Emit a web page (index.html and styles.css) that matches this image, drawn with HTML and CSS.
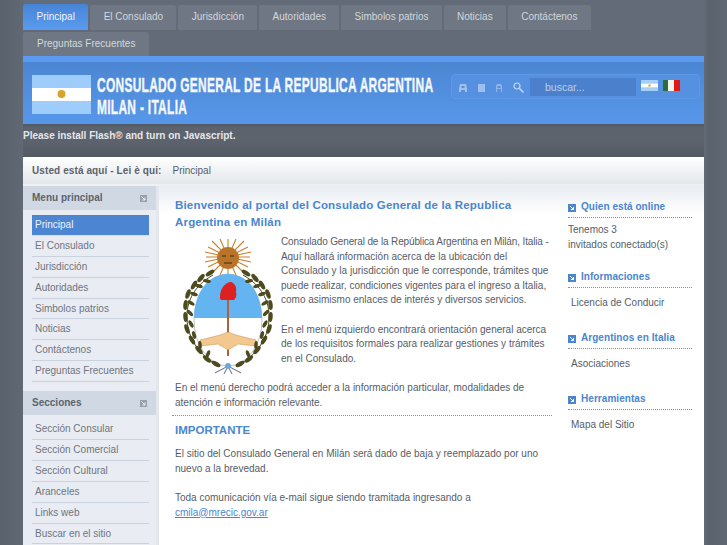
FILE: index.html
```html
<!DOCTYPE html>
<html lang="es">
<head>
  <meta charset="UTF-8">
  <title>Consulado General de la Republica Argentina - Milan</title>
  <link rel="stylesheet" href="styles.css">
</head>
<body>
  <div class="wrapper">
    <!-- Top menu -->
    <ul class="tabs">
      <li class="tab active">Principal</li>
      <li class="tab">El Consulado</li>
      <li class="tab">Jurisdicción</li>
      <li class="tab">Autoridades</li>
      <li class="tab">Simbolos patrios</li>
      <li class="tab">Noticias</li>
      <li class="tab">Contáctenos</li>
      <li class="tab">Preguntas Frecuentes</li>
    </ul>

    <!-- Banner -->
    <div class="banner">
      <svg class="banner-flag" width="59" height="39" viewBox="0 0 59 39">
        <rect width="59" height="39" fill="#9fcdfb"/>
        <rect y="13" width="59" height="13" fill="#fff"/>
        <circle cx="29.5" cy="19" r="4" fill="#d9a32e"/>
      </svg>
      <div class="banner-title">
        <span>CONSULADO GENERAL DE LA REPUBLICA ARGENTINA</span>
        <span>MILAN - ITALIA</span>
      </div>
      <div class="tools">
        <svg class="tool" width="10" height="10" viewBox="0 0 10 10"><path d="M2 1h6l1 4v4H7V7H3v2H1V5z M3.500 3v2h3V3z" fill="#9fc0ec" fill-rule="evenodd"/></svg>
        <svg class="tool" width="7" height="8" viewBox="0 0 7 8"><rect width="7" height="8" fill="#9fc0ec"/></svg>
        <svg class="tool" width="8" height="10" viewBox="0 0 8 10"><path d="M1 9V3l1-2h4l1 2v6H6V6H2v3z M2.500 3v2h3V3z" fill="#8fb4e6" fill-rule="evenodd"/></svg>
        <svg class="tool" width="11" height="11" viewBox="0 0 11 11"><circle cx="4" cy="4" r="3" fill="none" stroke="#c6daf5" stroke-width="1.200"/><path d="M6.500 6.500 10.500 10.500" stroke="#c6daf5" stroke-width="1.500"/></svg>
        <div class="search">buscar...</div>
        <svg class="mini-flag" width="17" height="11" viewBox="0 0 17 11">
          <rect width="17" height="11" fill="#a4d0f7"/>
          <rect y="3.700" width="17" height="3.600" fill="#fff"/>
          <circle cx="8.500" cy="5.500" r="1.300" fill="#e0b040"/>
        </svg>
        <svg class="mini-flag" width="17" height="11" viewBox="0 0 17 11">
          <rect width="6" height="11" fill="#2e6a3a"/>
          <rect x="5" width="6" height="11" fill="#f4f4f0"/>
          <rect x="11" width="6" height="11" fill="#e01b12"/>
        </svg>
      </div>
    </div>

    <div class="flash-note">Please install Flash® and turn on Javascript.</div>

    <div class="breadcrumb">
      <strong>Usted está aquí - Lei è qui:</strong>
      <span>Principal</span>
    </div>

    <div class="main">
      <!-- Left column -->
      <div class="left-col">
        <div class="menu-head">Menu principal
          <svg class="collapse" width="7" height="7" viewBox="0 0 7 7"><rect width="7" height="7" fill="#98a1ab"/><path d="M1.500 1.500 5 5M5 2.500V5H2.500" stroke="#eef1f4" fill="none"/></svg>
        </div>
        <ul class="side-menu">
          <li class="current">Principal</li>
          <li>El Consulado</li>
          <li>Jurisdicción</li>
          <li>Autoridades</li>
          <li>Simbolos patrios</li>
          <li>Noticias</li>
          <li>Contáctenos</li>
          <li>Preguntas Frecuentes</li>
        </ul>
        <div class="menu-head">Secciones
          <svg class="collapse" width="7" height="7" viewBox="0 0 7 7"><rect width="7" height="7" fill="#98a1ab"/><path d="M1.500 1.500 5 5M5 2.500V5H2.500" stroke="#eef1f4" fill="none"/></svg>
        </div>
        <ul class="side-menu">
          <li>Sección Consular</li>
          <li>Sección Comercial</li>
          <li>Sección Cultural</li>
          <li>Aranceles</li>
          <li>Links web</li>
          <li>Buscar en el sitio</li>
        </ul>
      </div>

      <!-- Center -->
      <div class="content">
        <div class="article">
          <h1>Bienvenido al portal del Consulado General de la Republica Argentina en Milán</h1>
          <svg class="arms" width="90" height="136" viewBox="0 0 90 136">
            <defs>
              <g id="laurel">
                <path d="M30 36C12 46 3 62 4 80c1 20 12 36 32 47" fill="none" stroke="#4d4a1e"/>
                <g fill="#4d4a1e">
                  <ellipse cx="27" cy="34" rx="5" ry="2.200" transform="rotate(-35 27 34)"/>
                  <ellipse cx="24" cy="42" rx="4" ry="1.800" transform="rotate(10 24 42)"/>
                  <ellipse cx="18" cy="39" rx="5" ry="2.200" transform="rotate(-50 18 39)"/>
                  <ellipse cx="16" cy="47" rx="4" ry="1.800" transform="rotate(15 16 47)"/>
                  <ellipse cx="11" cy="46" rx="5" ry="2.200" transform="rotate(-60 11 46)"/>
                  <ellipse cx="11" cy="55" rx="4" ry="1.800" transform="rotate(20 11 55)"/>
                  <ellipse cx="5" cy="55" rx="5" ry="2.200" transform="rotate(-70 5 55)"/>
                  <ellipse cx="8" cy="64" rx="4" ry="1.800" transform="rotate(30 8 64)"/>
                  <ellipse cx="2.500" cy="66" rx="5" ry="2.200" transform="rotate(-85 2.500 66)"/>
                  <ellipse cx="7" cy="74" rx="4" ry="1.800" transform="rotate(45 7 74)"/>
                  <ellipse cx="2.500" cy="78" rx="5" ry="2.200" transform="rotate(85 2.500 78)"/>
                  <ellipse cx="8" cy="85" rx="4" ry="1.800" transform="rotate(60 8 85)"/>
                  <ellipse cx="4" cy="90" rx="5" ry="2.200" transform="rotate(70 4 90)"/>
                  <ellipse cx="11" cy="96" rx="4" ry="1.800" transform="rotate(75 11 96)"/>
                  <ellipse cx="9" cy="101" rx="5" ry="2.200" transform="rotate(60 9 101)"/>
                  <ellipse cx="17" cy="106" rx="4" ry="1.800" transform="rotate(85 17 106)"/>
                  <ellipse cx="16" cy="111" rx="5" ry="2.200" transform="rotate(50 16 111)"/>
                  <ellipse cx="25" cy="115" rx="4" ry="1.800" transform="rotate(-70 25 115)"/>
                  <ellipse cx="24" cy="120" rx="5" ry="2.200" transform="rotate(40 24 120)"/>
                  <ellipse cx="33" cy="125" rx="5" ry="2.200" transform="rotate(30 33 125)"/>
                </g>
              </g>
            </defs>
            <!-- sun -->
            <g stroke="#c9802c" stroke-width="1.100">
              <path d="M45 0V36M23 18H67M29 2 61 34M61 2 29 34M37 0 53 36M53 0 37 36M25 8 65 28M65 8 25 28M22 13 68 23M68 13 22 23"/>
            </g>
            <circle cx="45" cy="19" r="11" fill="#b9742a"/>
            <path d="M39 17h4M47 17h4M41 24h8" stroke="#5c4526" stroke-width="1.500"/>
            <!-- shield -->
            <ellipse cx="45" cy="81" rx="34" ry="46" fill="#fff" stroke="#b9c4cf"/>
            <path d="M11 79C11.500 52 26 35 45 35s33.500 17 34 44z" fill="#64b4f2"/>
            <!-- pike and cap -->
            <path d="M45 60V117" stroke="#b0603a" stroke-width="2"/>
            <path d="M37 58c0-8 5-15 11-15 4 1 6 6 5 10 1 3 0 6-2 8H39c-2 0-2-2-2-3z" fill="#dd2020"/>
            <!-- hands -->
            <path d="M17 101 37 96l8-3 8 3 20 5-1 6-17-2-10 6-10-6-17 2z" fill="#f3c88f" stroke="#c98a50" stroke-width=".5"/>
            <!-- laurel -->
            <use href="#laurel"/>
            <use href="#laurel" transform="matrix(-1 0 0 1 90 0)"/>
            <!-- ribbon -->
            <path d="M32 134 45 127l13 7M45 127l-4 8M45 127l4 8" stroke="#5d6a86" fill="none"/>
            <circle cx="45" cy="127" r="3" fill="#6ea8e0"/>
          </svg>
          <p class="intro">Consulado General de la República Argentina en Milán, Italia - Aquí hallará información acerca de la ubicación del Consulado y la jurisdicción que le corresponde, trámites que puede realizar, condiciones vigentes para el ingreso a Italia, como asimismo enlaces de interés y diversos servicios.</p>
          <p class="gap">En el menú izquierdo encontrará orientación general acerca de los requisitos formales para realizar gestiones y trámites en el Consulado.</p>
          <p class="gap">En el menú derecho podrá acceder a la información particular, modalidades de atención e información relevante.</p>
          <div class="dots"></div>
          <h2>IMPORTANTE</h2>
          <p>El sitio del Consulado General en Milán será dado de baja y reemplazado por uno nuevo a la brevedad.</p>
          <p class="gap">Toda comunicación vía e-mail sigue siendo tramitada ingresando a <a href="#">cmila@mrecic.gov.ar</a></p>
        </div>

        <!-- Right column -->
        <div class="right-col">
          <div class="box">
            <h3><svg class="arrow" width="8" height="8" viewBox="0 0 8 8"><rect width="8" height="8" fill="#4a86d0"/><path d="M2 2 5.500 5.500M5.500 3V5.500H3" stroke="#fff" fill="none"/></svg>Quien está online</h3>
            <p>Tenemos 3<br>invitados conectado(s)</p>
          </div>
          <div class="box">
            <h3><svg class="arrow" width="8" height="8" viewBox="0 0 8 8"><rect width="8" height="8" fill="#4a86d0"/><path d="M2 2 5.500 5.500M5.500 3V5.500H3" stroke="#fff" fill="none"/></svg>Informaciones</h3>
            <div class="box-link">Licencia de Conducir</div>
          </div>
          <div class="box">
            <h3><svg class="arrow" width="8" height="8" viewBox="0 0 8 8"><rect width="8" height="8" fill="#4a86d0"/><path d="M2 2 5.500 5.500M5.500 3V5.500H3" stroke="#fff" fill="none"/></svg>Argentinos en Italia</h3>
            <div class="box-link">Asociaciones</div>
          </div>
          <div class="box">
            <h3><svg class="arrow" width="8" height="8" viewBox="0 0 8 8"><rect width="8" height="8" fill="#4a86d0"/><path d="M2 2 5.500 5.500M5.500 3V5.500H3" stroke="#fff" fill="none"/></svg>Herramientas</h3>
            <div class="box-link">Mapa del Sitio</div>
          </div>
        </div>
      </div>
    </div>
  </div>
</body>
</html>
```

FILE: styles.css
```css
html, body {
  height: 545px;
  overflow: hidden;
}

body {
  margin: 0;
  background: linear-gradient(to right, #59626c 0, #5f6873 22px, #626b77 23px, #626b77 704px, #5a636d 708px, #5f6873 100%);
  font-family: "Liberation Sans", Arial, sans-serif;
  font-size: 10px;
  color: #565d68;
}

ul {
  list-style: none;
  margin: 0;
  padding: 0;
}

.wrapper {
  width: 681px;
  margin-left: 23px;
}

/* Top menu */
.tabs {
  display: flex;
  flex-wrap: wrap;
  gap: 2px;
  height: 56px;
  align-content: flex-start;
  padding-top: 4px;
  box-sizing: border-box;
}

.tab {
  height: 25px;
  margin-top: 1px;
  line-height: 23px;
  padding: 0 13.3px;
  background: #6e7783;
  border-radius: 2px 2px 0 0;
  color: #d3d7dc;
}

.tab.active {
  height: 26px;
  margin-top: 0;
  line-height: 25px;
  padding: 0 13.5px;
  background: linear-gradient(#4684d6, #5b9cf0);
  color: #f1f5fb;
}

.tab:last-child {
  height: 24px;
  margin-top: 0;
  padding: 0 14px;
}

/* Banner */
.banner {
  height: 62px;
  border-top: 6px solid #5b9af0;
  background: linear-gradient(#4c86d2, #5797ea);
  display: flex;
  align-items: flex-start;
  padding-left: 9px;
}

.banner-flag {
  margin-top: 13px;
  flex: none;
}

.banner-title {
  width: 346px;
  margin: 12px 0 0 6px;
  flex: none;
  color: #f4f7fb;
  font-size: 20px;
  font-weight: bold;
  line-height: 22px;
  letter-spacing: .5px;
  -webkit-text-stroke: .4px #f4f7fb;
}

.banner-title span {
  display: block;
  white-space: nowrap;
  transform: scaleX(.597);
  transform-origin: left;
}

.tools {
  width: 249px;
  height: 25px;
  box-sizing: border-box;
  margin: 12px 0 0 8px;
  padding-left: 6px;
  border: 1px solid #5f98e6;
  border-radius: 4px;
  background: #5690e0;
  display: flex;
  align-items: center;
  gap: 10px;
  flex: none;
}

.tool {
  margin-top: 2px;
}

.search {
  width: 106px;
  height: 18px;
  line-height: 18px;
  padding-left: 15px;
  margin-left: -4px;
  box-sizing: border-box;
  background: #4a80cc;
  color: #b9d0ee;
  font-size: 10.5px;
}

.mini-flag {
  margin: -2px 0 0 -5px;
}

.flash-note {
  height: 33px;
  box-sizing: border-box;
  padding-top: 6px;
  background: linear-gradient(#505862 0, #5c636d 4px, #5c636d 18px, #525a64 100%);
  color: #e4e7ea;
  font-weight: bold;
}

.breadcrumb {
  height: 29px;
  box-sizing: border-box;
  padding: 8px 0 0 9px;
  background: linear-gradient(#fff, #e3e6ea);
  border-bottom: 2px solid #eef0f3;
  display: flex;
  gap: 11px;
}

.breadcrumb strong {
  color: #5c636d;
  letter-spacing: .1px;
}

/* Main area */
.main {
  display: flex;
  height: 360px;
  background: #fff;
}

.left-col {
  width: 133px;
  flex: none;
  background: #e9ecf2;
  border-right: 3px solid #e3e7ec;
}

.menu-head {
  height: 24px;
  line-height: 23px;
  padding: 0 9px;
  background: #d0d9e3;
  color: #5c636d;
  font-weight: bold;
  position: relative;
}

.collapse {
  position: absolute;
  right: 9px;
  top: 9px;
}

.side-menu {
  padding: 5px 7px 0 9px;
  margin-bottom: 9px;
}

.side-menu li {
  height: 19.9px;
  line-height: 19px;
  padding-left: 3px;
  border-bottom: 1px solid #c8d3df;
  color: #6f7680;
}

.side-menu .current {
  background: #4c86d2;
  color: #eef3fa;
  border-bottom-color: #d5deea;
}

.side-menu + .menu-head + .side-menu {
  padding-top: 4px;
}

.content {
  flex: 1;
  display: flex;
  background: linear-gradient(#e9edf2 0, #fff 28px);
}

.article {
  width: 377px;
  margin-left: 16px;
  padding-top: 11px;
  flex: none;
}

h1 {
  margin: 0 0 4px;
  color: #4a86d0;
  font-size: 11.5px;
  line-height: 17px;
  letter-spacing: .18px;
}

.arms {
  float: left;
  margin: 4px 8px 0 8px;
}

.article p {
  margin: 0;
  line-height: 14.6px;
}

.article .intro::first-line {
  letter-spacing: -.14px;
}

.article .gap {
  margin-top: 14.6px;
}

.dots {
  margin: 5px 0 0 -3px;
  border-top: 1px dotted #8a8f96;
}

h2 {
  margin: 7px 0 10px;
  color: #4a86d0;
  font-size: 11.5px;
  line-height: 14px;
}

a {
  color: #4a86d0;
}

.right-col {
  width: 124px;
  margin-left: 16px;
  padding-top: 14px;
}

.box {
  margin-bottom: 21px;
}

h3 {
  margin: 0;
  padding-bottom: 4px;
  border-bottom: 1px dotted #8a8f96;
  color: #4a86d0;
  font-size: 10px;
  line-height: 13px;
  letter-spacing: .05px;
  display: flex;
  align-items: center;
  gap: 5px;
}

.arrow {
  flex: none;
  margin-top: 2px;
}

.box p {
  margin: 5px 0 -3px;
  line-height: 14.6px;
}

.box-link {
  margin-top: 8px;
  padding-left: 3px;
  line-height: 14px;
}
```
